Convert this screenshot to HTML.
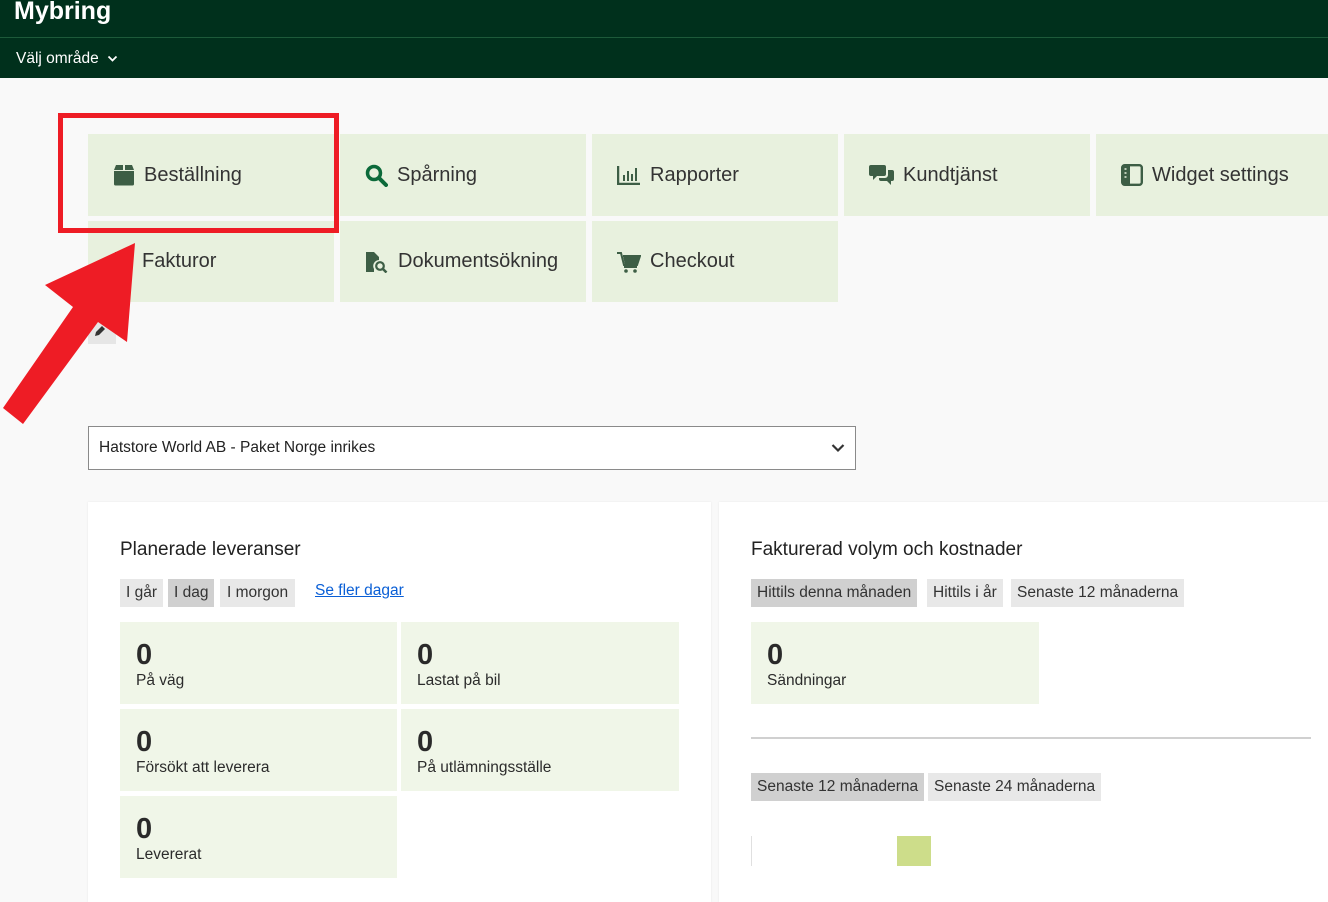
<!DOCTYPE html>
<html><head><meta charset="utf-8"><style>
*{margin:0;padding:0;box-sizing:border-box}
body{width:1328px;height:862px;overflow:hidden;background:#f9f9f9;font-family:"Liberation Sans",sans-serif;color:#2b2b2b;position:relative}
.a{position:absolute}
.top{left:0;top:0;width:1328px;height:37px;background:#00301c}
.nav{left:0;top:37px;width:1328px;height:41px;background:#00301c;border-top:1px solid #1d5a3a}
.tile{position:absolute;background:#e8f1de;height:82px;width:246px;display:flex;align-items:center;padding-left:25px;font-size:20px;color:#333}
.tile svg{margin-right:9px;flex:none}
.card{position:absolute;background:#fff;top:502px;height:400px;box-shadow:0 0 2px rgba(0,0,0,.08)}
.h{position:absolute;font-size:19px;color:#222}
.btn{position:absolute;background:#e8e8e8;height:28px;font-size:15.5px;line-height:28px;padding:0 6px;color:#333;white-space:nowrap}
.btn.on{background:#d0d0d0}
.st{position:absolute;background:#f0f6e8;width:277px;height:82px;padding:18px 0 0 16px}
.st b{display:block;font-size:29px;line-height:30px;color:#2a2a2a}
.st span{display:block;font-size:15.5px;margin-top:2px}
</style></head><body>
<div class="a top"></div>
<div class="a" style="left:14px;top:-3px;color:#fff;font-weight:bold;font-size:25px">Mybring</div>
<div class="a nav"></div>
<div class="a" style="left:16px;top:50px;color:#fff;font-size:15.5px">Välj område <svg width="11" height="8" viewBox="0 0 11 8" style="margin-left:4px"><path d="M1.5 1.5l4 4 4-4" stroke="#fff" stroke-width="1.8" fill="none"/></svg></div>

<div class="tile" style="left:88px;top:134px"><svg width="22" height="22" viewBox="0 0 22 22"><path d="M1 7h20v13a1.5 1.5 0 0 1-1.5 1.5h-17A1.5 1.5 0 0 1 1 20z M1 6l2-5h7v5z M12 6V1h7l2 5z" fill="#3d5e45"/></svg>Beställning</div>
<div class="tile" style="left:340px;top:134px"><svg width="23" height="23" viewBox="0 0 23 23"><circle cx="9" cy="9" r="6.5" stroke="#0c6a3a" stroke-width="3.5" fill="none"/><path d="M14 14l7 7" stroke="#0c6a3a" stroke-width="4" stroke-linecap="round"/></svg>Spårning</div>
<div class="tile" style="left:592px;top:134px"><svg width="24" height="20" viewBox="0 0 24 20"><path d="M1 1v18h22" stroke="#3d5e45" stroke-width="2.5" fill="none"/><path d="M6 10h2v6H6zM10 6h2v10h-2zM14 9h2v7h-2zM18 3h2v13h-2z" fill="#3d5e45"/></svg>Rapporter</div>
<div class="tile" style="left:844px;top:134px"><svg width="25" height="22" viewBox="0 0 25 22"><path d="M2 1h13a2 2 0 0 1 2 2v7a2 2 0 0 1-2 2H8l-4 4v-4H2a2 2 0 0 1-2-2V3a2 2 0 0 1 2-2z" fill="#3d5e45"/><path d="M19 6h4a2 2 0 0 1 2 2v7a2 2 0 0 1-2 2h-1v4l-4-4h-6a2 2 0 0 1-2-2v-1h6a3 3 0 0 0 3-3z" fill="#3d5e45"/></svg>Kundtjänst</div>
<div class="tile" style="left:1096px;top:134px;width:240px"><svg width="22" height="22" viewBox="0 0 22 22"><rect x="1.2" y="1.2" width="19.6" height="19.6" rx="2.5" stroke="#3d5e45" stroke-width="2.4" fill="none"/><rect x="1" y="1" width="8" height="20" fill="#3d5e45"/><path d="M3.5 5h2M3.5 9h2M3.5 13h2" stroke="#e8f1de" stroke-width="1.6"/></svg>Widget settings</div>
<div class="tile" style="left:88px;top:221px;height:81px"><svg width="20" height="22" viewBox="0 0 20 22"><rect x="2" y="1" width="16" height="20" fill="#3d5e45"/></svg>Fakturor</div>
<div class="tile" style="left:340px;top:221px;height:81px"><svg width="24" height="22" viewBox="0 0 24 22"><path d="M1 1h8l5 5v3a6 6 0 0 0-5 9v3H1z" fill="#3d5e45"/><circle cx="15" cy="15" r="3.8" stroke="#3d5e45" stroke-width="2.2" fill="none"/><path d="M18 18l3.5 3.5" stroke="#3d5e45" stroke-width="2.5"/></svg>Dokumentsökning</div>
<div class="tile" style="left:592px;top:221px;height:81px"><svg width="24" height="22" viewBox="0 0 24 22"><path d="M0 2h4l3 12h13l3-9H6" fill="none" stroke="#3d5e45" stroke-width="2"/><path d="M6 5h17l-3 9H8z" fill="#3d5e45"/><path d="M7 16h13" stroke="#3d5e45" stroke-width="2"/><circle cx="9" cy="20" r="1.8" fill="#3d5e45"/><circle cx="18" cy="20" r="1.8" fill="#3d5e45"/></svg>Checkout</div>

<div class="a" style="left:88px;top:322px;width:28px;height:22px;background:#e6e6e6"></div>
<svg class="a" style="left:93px;top:324px" width="14" height="14" viewBox="0 0 14 14"><path d="M2 12l1-4 6-6 3 3-6 6z" fill="#333"/></svg>

<div class="a" style="left:58px;top:113px;width:281px;height:120px;border:5px solid #ee1c25"></div>
<svg class="a" style="left:0;top:0" width="200" height="440"><polygon points="135,243 45,285 73,307 3,408 23,424 98,322 127,342" fill="#ee1c25"/></svg>

<div class="a" style="left:88px;top:426px;width:768px;height:44px;background:#fff;border:1px solid #8a8a8a;font-size:15.5px;line-height:42px;padding-left:10px;color:#222">Hatstore World AB - Paket Norge inrikes
<svg class="a" style="right:10px;top:16px" width="14" height="10" viewBox="0 0 14 10"><path d="M1.5 2l5.5 5.5L12.5 2" stroke="#333" stroke-width="2.2" fill="none"/></svg></div>

<div class="card" style="left:88px;width:623px"></div>
<div class="card" style="left:719px;width:620px"></div>

<div class="h" style="left:120px;top:539px">Planerade leveranser</div>
<div class="btn" style="left:120px;top:579px">I går</div>
<div class="btn on" style="left:168px;top:579px">I dag</div>
<div class="btn" style="left:220px;top:579px;padding:0 7px">I morgon</div>
<div class="a" style="left:315px;top:582px;font-size:15.5px;color:#0a5fd6;text-decoration:underline">Se fler dagar</div>
<div class="st" style="left:120px;top:622px"><b>0</b><span>På väg</span></div>
<div class="st" style="left:401px;top:622px;width:278px"><b>0</b><span>Lastat på bil</span></div>
<div class="st" style="left:120px;top:709px"><b>0</b><span>Försökt att leverera</span></div>
<div class="st" style="left:401px;top:709px;width:278px"><b>0</b><span>På utlämningsställe</span></div>
<div class="st" style="left:120px;top:796px"><b>0</b><span>Levererat</span></div>

<div class="h" style="left:751px;top:539px">Fakturerad volym och kostnader</div>
<div class="btn on" style="left:751px;top:579px">Hittils denna månaden</div>
<div class="btn" style="left:927px;top:579px">Hittils i år</div>
<div class="btn" style="left:1011px;top:579px">Senaste 12 månaderna</div>
<div class="st" style="left:751px;top:622px;width:288px"><b>0</b><span>Sändningar</span></div>
<div class="a" style="left:751px;top:737px;width:560px;height:2px;background:#d0d0d0"></div>
<div class="btn on" style="left:751px;top:773px">Senaste 12 månaderna</div>
<div class="btn" style="left:928px;top:773px">Senaste 24 månaderna</div>
<div class="a" style="left:751px;top:836px;width:1px;height:30px;background:#e0e0e0"></div>
<div class="a" style="left:897px;top:836px;width:34px;height:30px;background:#cddd8a"></div>
</body></html>
